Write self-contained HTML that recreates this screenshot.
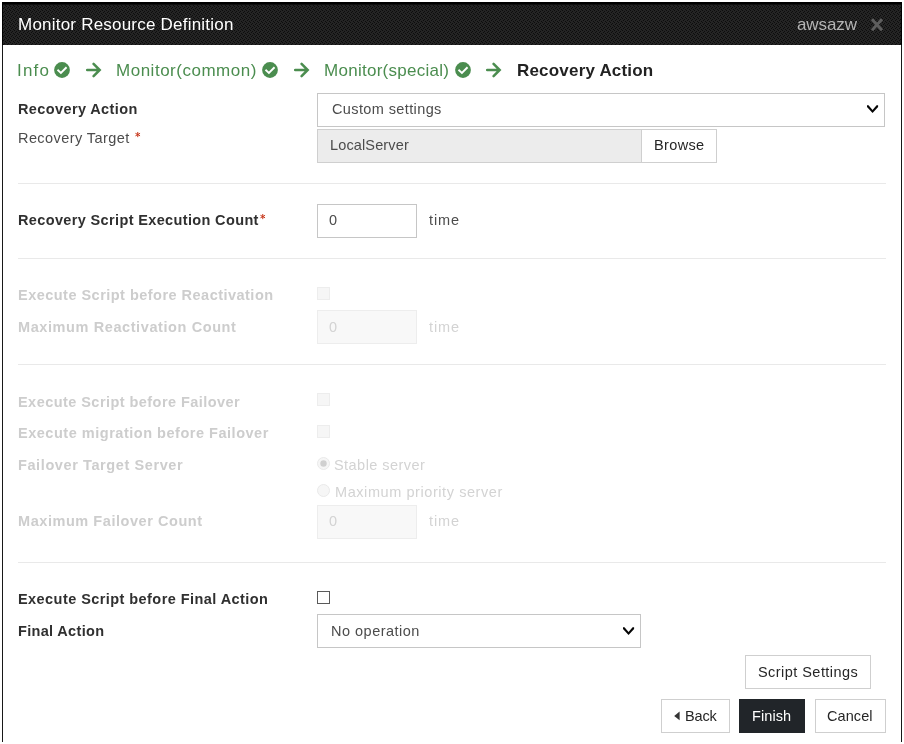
<!DOCTYPE html>
<html><head><meta charset="utf-8"><title>Monitor Resource Definition</title>
<style>
html,body{margin:0;padding:0;background:#fff;}
body{width:904px;height:744px;position:relative;overflow:hidden;font-family:"Liberation Sans",sans-serif;}
.a{position:absolute;display:block;}
.t{position:absolute;white-space:pre;line-height:1;will-change:transform;}
</style></head><body>
<svg class="a" style="left:134.75px;top:131.85px" width="6" height="6" viewBox="0 0 6 6"><path d="M2.75 0 V5.15 M0.45 1.3 L5.05 3.85 M0.45 3.85 L5.05 1.3" fill="none" stroke="#c7361a" stroke-width="1.0" stroke-linecap="butt"/></svg>
<svg class="a" style="left:259.75px;top:213.80px" width="6" height="6" viewBox="0 0 6 6"><path d="M2.75 0 V5.15 M0.45 1.3 L5.05 3.85 M0.45 3.85 L5.05 1.3" fill="none" stroke="#c7361a" stroke-width="1.0" stroke-linecap="butt"/></svg>
<svg class="a" style="left:2px;top:2px" width="900" height="43" viewBox="0 0 900 43" shape-rendering="crispEdges"><defs><pattern id="dz" width="4" height="4" patternUnits="userSpaceOnUse"><rect width="4" height="4" fill="#242424"/><rect x="0" y="0" width="1" height="1" fill="#0c0c0c"/><rect x="2" y="1" width="1" height="1" fill="#0c0c0c"/><rect x="1" y="2" width="1" height="1" fill="#0c0c0c"/><rect x="3" y="3" width="1" height="1" fill="#0c0c0c"/></pattern></defs><rect width="900" height="43" fill="url(#dz)"/><rect width="900" height="2" fill="#000"/><rect y="2" width="900" height="1" fill="#0e0e0e"/><rect width="1" height="43" fill="#000"/><rect x="899" width="1" height="43" fill="#000"/></svg>
<div class="a" style="left:2px;top:45px;width:1px;height:697px;background:#181818"></div>
<div class="a" style="left:901px;top:45px;width:1px;height:697px;background:#181818"></div>
<svg class="a" style="left:870px;top:18px" width="14" height="14" viewBox="0 0 14 14"><path d="M2 1.3 L12 12.2 M12 1.3 L2 12.2" fill="none" stroke="#5e5e5e" stroke-width="3" stroke-linecap="butt"/></svg>
<svg class="a" style="left:54.20px;top:61.90px" width="16" height="16" viewBox="0 0 16 16"><circle cx="8" cy="8" r="7.9" fill="#4b8d4f"/><path d="M4.2 8.4 L6.9 11 L11.9 5.9" fill="none" stroke="#fff" stroke-width="1.9" stroke-linecap="square" stroke-linejoin="miter"/></svg>
<svg class="a" style="left:262.20px;top:61.90px" width="16" height="16" viewBox="0 0 16 16"><circle cx="8" cy="8" r="7.9" fill="#4b8d4f"/><path d="M4.2 8.4 L6.9 11 L11.9 5.9" fill="none" stroke="#fff" stroke-width="1.9" stroke-linecap="square" stroke-linejoin="miter"/></svg>
<svg class="a" style="left:454.90px;top:61.90px" width="16" height="16" viewBox="0 0 16 16"><circle cx="8" cy="8" r="7.9" fill="#4b8d4f"/><path d="M4.2 8.4 L6.9 11 L11.9 5.9" fill="none" stroke="#fff" stroke-width="1.9" stroke-linecap="square" stroke-linejoin="miter"/></svg>
<svg class="a" style="left:85.50px;top:61.90px" width="16" height="16" viewBox="0 0 16 16"><path d="M1.2 8 H13 M7.6 1.9 L13.7 8 L7.6 14.1" fill="none" stroke="#4b8d4f" stroke-width="2.5" stroke-linecap="round" stroke-linejoin="miter"/></svg>
<svg class="a" style="left:293.50px;top:61.90px" width="16" height="16" viewBox="0 0 16 16"><path d="M1.2 8 H13 M7.6 1.9 L13.7 8 L7.6 14.1" fill="none" stroke="#4b8d4f" stroke-width="2.5" stroke-linecap="round" stroke-linejoin="miter"/></svg>
<svg class="a" style="left:486.00px;top:61.90px" width="16" height="16" viewBox="0 0 16 16"><path d="M1.2 8 H13 M7.6 1.9 L13.7 8 L7.6 14.1" fill="none" stroke="#4b8d4f" stroke-width="2.5" stroke-linecap="round" stroke-linejoin="miter"/></svg>
<div class="a" style="left:317px;top:93px;width:568px;height:34px;background:#fff;border:1px solid #c6c6c6;box-sizing:border-box"></div>
<svg class="a" style="left:866.80px;top:104.70px" width="12" height="9" viewBox="0 0 12 9"><path d="M0 0.3 L1.5 0.3 L5.55 4.9 L9.6 0.3 L11.1 0.3 L11.1 2.0 L5.55 7.9 L0 2.0 Z" fill="#050505"/></svg>
<div class="a" style="left:317px;top:129px;width:325px;height:34px;background:#ececec;border:1px solid #cfcfcf;box-sizing:border-box"></div>
<div class="a" style="left:641px;top:129px;width:76px;height:34px;background:#fff;border:1px solid #cfcfcf;box-sizing:border-box"></div>
<div class="a" style="left:18px;top:183px;width:868px;height:1px;background:#e9e9e9"></div>
<div class="a" style="left:317px;top:204px;width:100px;height:34px;background:#fff;border:1px solid #c6c6c6;box-sizing:border-box"></div>
<div class="a" style="left:18px;top:258px;width:868px;height:1px;background:#e9e9e9"></div>
<div class="a" style="left:317px;top:287px;width:13px;height:13px;background:#f6f6f6;border:1px solid #ededed;box-sizing:border-box"></div>
<div class="a" style="left:317px;top:310px;width:100px;height:34px;background:#f8f8f8;border:1px solid #ededed;box-sizing:border-box"></div>
<div class="a" style="left:18px;top:364px;width:868px;height:1px;background:#e9e9e9"></div>
<div class="a" style="left:317px;top:393px;width:13px;height:13px;background:#f6f6f6;border:1px solid #ededed;box-sizing:border-box"></div>
<div class="a" style="left:317px;top:425px;width:13px;height:13px;background:#f6f6f6;border:1px solid #ededed;box-sizing:border-box"></div>
<svg class="a" style="left:317px;top:457px" width="13" height="13" viewBox="0 0 13 13"><circle cx="6.5" cy="6.5" r="6" fill="#f6f6f6" stroke="#e9e9e9" stroke-width="1"/><circle cx="6.5" cy="6.5" r="3.2" fill="#d0d0d0"/></svg>
<svg class="a" style="left:317px;top:484px" width="13" height="13" viewBox="0 0 13 13"><circle cx="6.5" cy="6.5" r="6" fill="#f6f6f6" stroke="#e9e9e9" stroke-width="1"/></svg>
<div class="a" style="left:317px;top:505px;width:100px;height:34px;background:#f8f8f8;border:1px solid #ededed;box-sizing:border-box"></div>
<div class="a" style="left:18px;top:562px;width:868px;height:1px;background:#e9e9e9"></div>
<div class="a" style="left:317px;top:591px;width:13px;height:13px;background:#fff;border:1px solid #5a5a5a;box-sizing:border-box"></div>
<div class="a" style="left:317px;top:614px;width:324px;height:34px;background:#fff;border:1px solid #c6c6c6;box-sizing:border-box"></div>
<svg class="a" style="left:622.90px;top:626.90px" width="12" height="9" viewBox="0 0 12 9"><path d="M0 0.3 L1.5 0.3 L5.55 4.9 L9.6 0.3 L11.1 0.3 L11.1 2.0 L5.55 7.9 L0 2.0 Z" fill="#050505"/></svg>
<div class="a" style="left:745px;top:655px;width:126px;height:34px;background:#fff;border:1px solid #cfcfcf;box-sizing:border-box"></div>
<div class="a" style="left:661px;top:699px;width:69px;height:34px;background:#fff;border:1px solid #cfcfcf;box-sizing:border-box"></div>
<div class="a" style="left:739px;top:699px;width:66px;height:34px;background:#212529;border:1px solid #212529;box-sizing:border-box"></div>
<div class="a" style="left:815px;top:699px;width:71px;height:34px;background:#fff;border:1px solid #cfcfcf;box-sizing:border-box"></div>
<svg class="a" style="left:674.4px;top:710.9px" width="6" height="10" viewBox="0 0 6 10"><path d="M5.6 0.6 L0.2 4.9 L5.6 9.2 Z" fill="#333"/></svg>
<span class="t" style="left:17.58px;top:15.86px;font-size:17px;font-weight:400;color:#fff;letter-spacing:0.216px">Monitor Resource Definition</span>
<span class="t" style="left:796.85px;top:15.86px;font-size:17px;font-weight:400;color:#b4b4b4;letter-spacing:-0.090px">awsazw</span>
<span class="t" style="left:16.55px;top:61.86px;font-size:17px;font-weight:400;color:#4b8d4f;letter-spacing:1.200px">Info</span>
<span class="t" style="left:115.70px;top:61.86px;font-size:17px;font-weight:400;color:#4b8d4f;letter-spacing:0.514px">Monitor(common)</span>
<span class="t" style="left:323.85px;top:61.86px;font-size:17px;font-weight:400;color:#4b8d4f;letter-spacing:0.270px">Monitor(special)</span>
<span class="t" style="left:516.85px;top:61.86px;font-size:17px;font-weight:700;color:#222;letter-spacing:0.193px">Recovery Action</span>
<span class="t" style="left:17.85px;top:101.98px;font-size:14.5px;font-weight:700;color:#303030;letter-spacing:0.386px">Recovery Action</span>
<span class="t" style="left:17.85px;top:130.98px;font-size:14.5px;font-weight:400;color:#4c4c4c;letter-spacing:0.418px">Recovery Target</span>
<span class="t" style="left:332.00px;top:101.98px;font-size:14.5px;font-weight:400;color:#4c4c4c;letter-spacing:0.386px">Custom settings</span>
<span class="t" style="left:329.85px;top:137.98px;font-size:14.5px;font-weight:400;color:#4c4c4c;letter-spacing:0.135px">LocalServer</span>
<span class="t" style="left:654.00px;top:137.98px;font-size:14.5px;font-weight:400;color:#262626;letter-spacing:0.360px">Browse</span>
<span class="t" style="left:17.85px;top:212.98px;font-size:14.5px;font-weight:700;color:#303030;letter-spacing:0.360px">Recovery Script Execution Count</span>
<span class="t" style="left:329.45px;top:212.98px;font-size:14.5px;font-weight:400;color:#4c4c4c;letter-spacing:0.000px">0</span>
<span class="t" style="left:429.00px;top:212.98px;font-size:14.5px;font-weight:400;color:#4c4c4c;letter-spacing:0.900px">time</span>
<span class="t" style="left:17.85px;top:287.98px;font-size:14.5px;font-weight:700;color:#cdcdcd;letter-spacing:0.477px">Execute Script before Reactivation</span>
<span class="t" style="left:17.85px;top:319.98px;font-size:14.5px;font-weight:700;color:#cdcdcd;letter-spacing:0.594px">Maximum Reactivation Count</span>
<span class="t" style="left:329.45px;top:319.98px;font-size:14.5px;font-weight:400;color:#d3d3d3;letter-spacing:0.000px">0</span>
<span class="t" style="left:429.00px;top:319.98px;font-size:14.5px;font-weight:400;color:#d3d3d3;letter-spacing:0.900px">time</span>
<span class="t" style="left:17.85px;top:394.98px;font-size:14.5px;font-weight:700;color:#cdcdcd;letter-spacing:0.450px">Execute Script before Failover</span>
<span class="t" style="left:17.85px;top:425.98px;font-size:14.5px;font-weight:700;color:#cdcdcd;letter-spacing:0.520px">Execute migration before Failover</span>
<span class="t" style="left:17.85px;top:457.98px;font-size:14.5px;font-weight:700;color:#cdcdcd;letter-spacing:0.600px">Failover Target Server</span>
<span class="t" style="left:333.90px;top:457.98px;font-size:14.5px;font-weight:400;color:#d3d3d3;letter-spacing:0.450px">Stable server</span>
<span class="t" style="left:334.80px;top:484.98px;font-size:14.5px;font-weight:400;color:#d3d3d3;letter-spacing:0.573px">Maximum priority server</span>
<span class="t" style="left:17.85px;top:513.98px;font-size:14.5px;font-weight:700;color:#cdcdcd;letter-spacing:0.557px">Maximum Failover Count</span>
<span class="t" style="left:329.45px;top:513.98px;font-size:14.5px;font-weight:400;color:#d3d3d3;letter-spacing:0.000px">0</span>
<span class="t" style="left:429.00px;top:513.98px;font-size:14.5px;font-weight:400;color:#d3d3d3;letter-spacing:0.900px">time</span>
<span class="t" style="left:17.85px;top:591.98px;font-size:14.5px;font-weight:700;color:#303030;letter-spacing:0.436px">Execute Script before Final Action</span>
<span class="t" style="left:17.85px;top:623.98px;font-size:14.5px;font-weight:700;color:#303030;letter-spacing:0.327px">Final Action</span>
<span class="t" style="left:331.45px;top:623.98px;font-size:14.5px;font-weight:400;color:#4c4c4c;letter-spacing:0.491px">No operation</span>
<span class="t" style="left:757.50px;top:664.98px;font-size:14.5px;font-weight:400;color:#262626;letter-spacing:0.450px">Script Settings</span>
<span class="t" style="left:684.80px;top:708.98px;font-size:14.5px;font-weight:400;color:#262626;letter-spacing:-0.150px">Back</span>
<span class="t" style="left:752.45px;top:708.98px;font-size:14.5px;font-weight:400;color:#fff;letter-spacing:0.090px">Finish</span>
<span class="t" style="left:827.05px;top:708.98px;font-size:14.5px;font-weight:400;color:#262626;letter-spacing:0.090px">Cancel</span>
</body></html>
